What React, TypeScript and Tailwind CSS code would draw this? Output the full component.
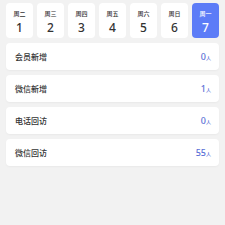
import React from "react";

const days = [
  { w: "周二", d: "1" },
  { w: "周三", d: "2" },
  { w: "周四", d: "3" },
  { w: "周五", d: "4" },
  { w: "周六", d: "5" },
  { w: "周日", d: "6" },
  { w: "周一", d: "7", active: true },
];

const rows = [
  { label: "会员新增", value: "0" },
  { label: "微信新增", value: "1" },
  { label: "电话回访", value: "0" },
  { label: "微信回访", value: "55" },
];

export default function App() {
  return (
    <div
      className="w-[225px] h-[225px] bg-[#f2f2f2] px-[6px] pt-[3px]"
      style={{ fontFamily: '"Noto Sans", "Noto Sans CJK SC", sans-serif' }}
    >
      <div className="flex gap-[4px]">
        {days.map((x) => (
          <div
            key={x.w}
            className={
              x.active
                ? "w-[27px] h-[35px] rounded-[4px] bg-[#5c7cf7] flex flex-col items-center text-white"
                : "w-[27px] h-[35px] rounded-[4px] bg-white flex flex-col items-center text-[#333]"
            }
          >
            <div className="text-[6px] leading-none mt-[8px] font-medium">{x.w}</div>
            <div className="text-[12px] leading-none mt-[5px] font-medium">{x.d}</div>
          </div>
        ))}
      </div>
      <div className="flex flex-col gap-[5px] mt-[5px]">
        {rows.map((r) => (
          <div
            key={r.label}
            className="h-[27px] rounded-[4px] bg-white shadow-[0_1px_2px_rgba(0,0,0,0.04)] flex items-center justify-between pl-[9px] pr-[8px]"
          >
            <span className="text-[8px] text-[#333] font-medium">{r.label}</span>
            <span className="text-[#5a6fd6] flex items-baseline font-medium">
              <span className="text-[9px]">{r.value}</span>
              <span className="text-[5px]">人</span>
            </span>
          </div>
        ))}
      </div>
    </div>
  );
}
